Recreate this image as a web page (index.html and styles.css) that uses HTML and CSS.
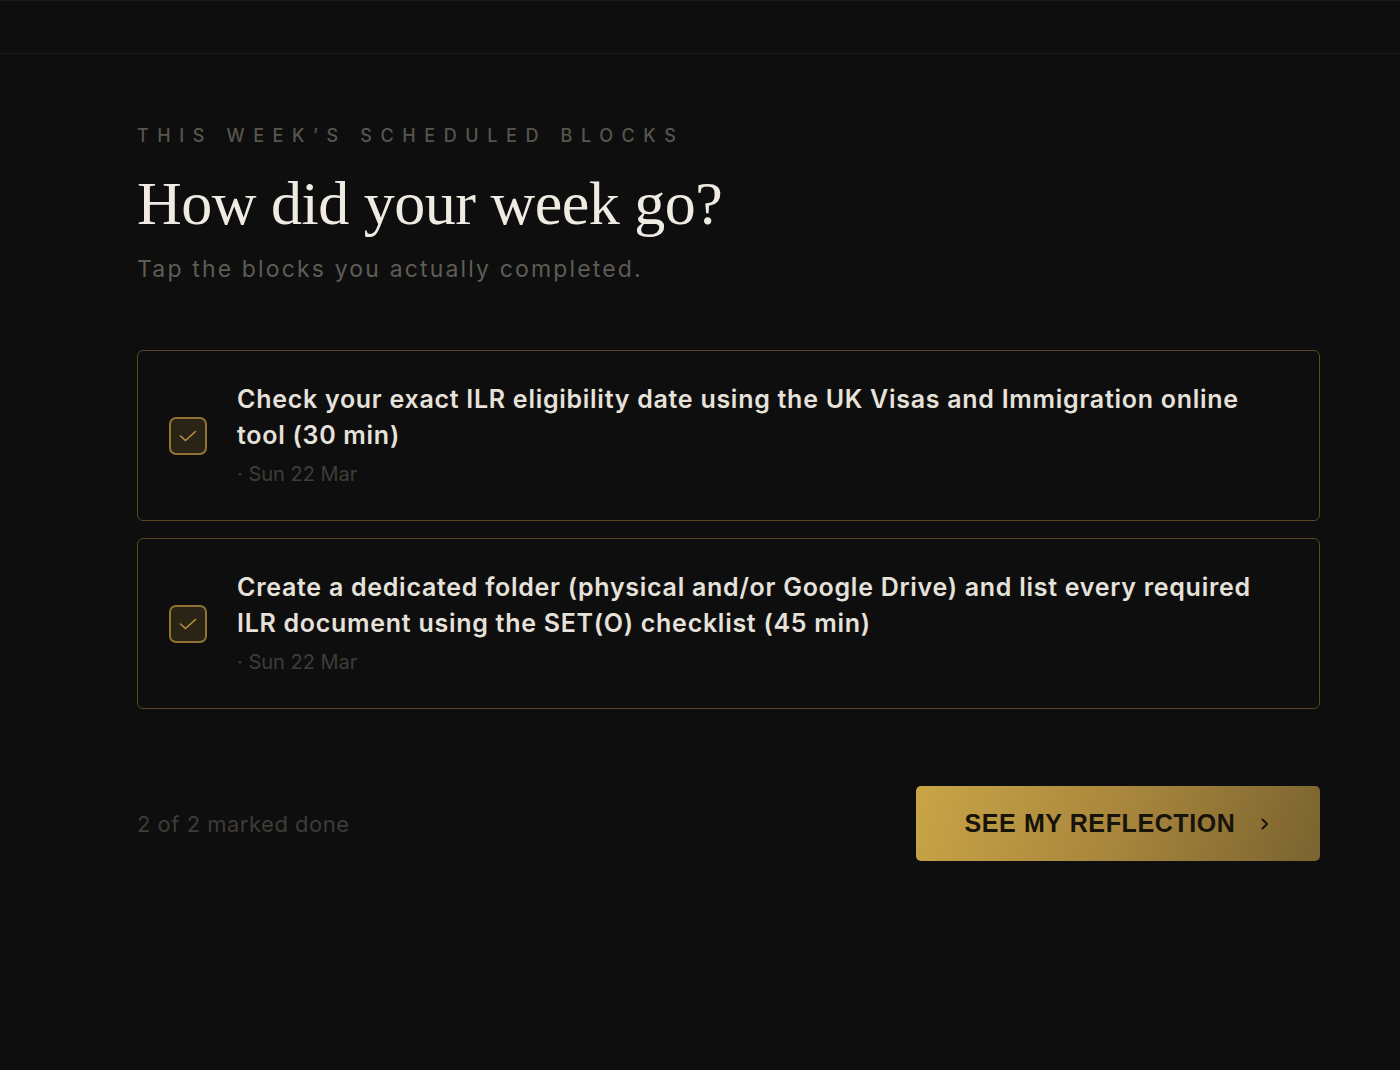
FILE: index.html
```html
<!DOCTYPE html>
<html lang="en">
<head>
<meta charset="utf-8">
<title>How did your week go?</title>
<link rel="stylesheet" href="styles.css">
</head>
<body>
<header class="topbar"></header>
<main class="page">
  <p class="eyebrow">This week’s scheduled blocks</p>
  <h1 class="title">How did your week go?</h1>
  <p class="subtitle">Tap the blocks you actually completed.</p>

  <ul class="blocks">
    <li class="block">
      <span class="check">
        <svg viewBox="0 0 20 14" width="20" height="14"><path d="M2.5 7l5 4.5L17.5 2.5" fill="none" stroke="#b8923e" stroke-width="1.6" stroke-linecap="round" stroke-linejoin="round"/></svg>
      </span>
      <div class="block-body">
        <p class="block-title">Check your exact ILR eligibility date using the UK Visas and Immigration online tool (30 min)</p>
        <p class="block-date">· Sun 22 Mar</p>
      </div>
    </li>
    <li class="block">
      <span class="check">
        <svg viewBox="0 0 20 14" width="20" height="14"><path d="M2.5 7l5 4.5L17.5 2.5" fill="none" stroke="#b8923e" stroke-width="1.6" stroke-linecap="round" stroke-linejoin="round"/></svg>
      </span>
      <div class="block-body">
        <p class="block-title">Create a dedicated folder (physical and/or Google Drive) and list every required ILR document using the SET(O) checklist (45 min)</p>
        <p class="block-date">· Sun 22 Mar</p>
      </div>
    </li>
  </ul>

  <div class="footer">
    <span class="count">2 of 2 marked done</span>
    <button class="cta">SEE MY REFLECTION
      <svg viewBox="0 0 12 16" width="12" height="16"><path d="M3.5 3.5L8 8l-4.5 4.5" fill="none" stroke="#1a150a" stroke-width="2" stroke-linecap="round" stroke-linejoin="round"/></svg>
    </button>
  </div>
</main>
</body>
</html>
```

FILE: styles.css
```css
* { box-sizing: border-box; }
html, body { margin: 0; padding: 0; }
body {
  background: #0e0e0e;
  color: #ece8df;
  font-family: Inter, "Noto Sans", sans-serif;
  min-height: 1070px;
}
.topbar {
  height: 54px;
  border-top: 1px solid #1a1a1a;
  border-bottom: 1px solid #1b1b1b;
}
.page {
  padding: 70px 80px 0 137px;
}
.eyebrow {
  margin: 0;
  font-size: 18px;
  letter-spacing: 8.6px;
  text-transform: uppercase;
  color: #58554f;
  font-weight: 500;
  line-height: 24px;
}
.title {
  margin: 20px 0 0;
  font-family: "Liberation Serif", "DejaVu Serif", serif;
  font-weight: 400;
  font-size: 62px;
  letter-spacing: -0.5px;
  line-height: 70px;
  color: #efebe2;
}
.subtitle {
  margin: 16px 0 0;
  font-size: 23px;
  letter-spacing: 2.15px;
  line-height: 30px;
  color: #5f5c56;
}
.blocks {
  list-style: none;
  margin: 66px 0 0;
  padding: 0;
  width: 1183px;
  display: flex;
  flex-direction: column;
  gap: 17px;
}
.block {
  display: flex;
  align-items: center;
  gap: 30px;
  height: 171px;
  padding: 0 30px 4px 31px;
  border: 1.5px solid #594823;
  border-radius: 6px;
}
.check {
  flex: none;
  width: 38px;
  height: 38px;
  margin-top: 4px;
  border: 2px solid #8f7234;
  border-radius: 7px;
  background: #2a2417;
  display: flex;
  align-items: center;
  justify-content: center;
}
.block-title {
  margin: 0;
  font-size: 25px;
  line-height: 36px;
  font-weight: 600;
  letter-spacing: 0.72px;
  color: #e6e2da;
}
.block-date {
  margin: 8px 0 0;
  font-size: 20px;
  line-height: 26px;
  color: #3f3d39;
}
.footer {
  width: 1183px;
  margin-top: 77px;
  display: flex;
  align-items: center;
  justify-content: space-between;
}
.count {
  font-size: 22px;
  letter-spacing: 0.5px;
  color: #3e3c38;
}
.cta {
  width: 404px;
  height: 75px;
  border: none;
  border-radius: 5px;
  background: linear-gradient(110deg, #c9a547 0%, #a8863c 50%, #7a6330 100%);
  color: #17130a;
  font-family: "Liberation Sans", Arial, sans-serif;
  font-weight: 700;
  font-size: 25px;
  letter-spacing: 0.6px;
  display: flex;
  align-items: center;
  justify-content: center;
  gap: 24px;
  padding: 0 0 0 0;
  margin-right: 0;
}
```
